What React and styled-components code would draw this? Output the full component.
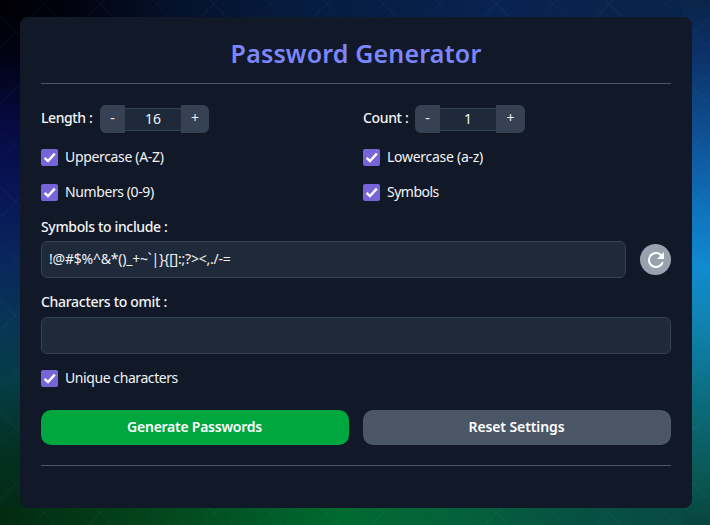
import React, { useState } from "react";
import styled, { createGlobalStyle } from "styled-components";

const GlobalStyle = createGlobalStyle`
  * { box-sizing: border-box; }
  body { margin: 0; background: #06203c; }
  button, input { font: inherit; color: inherit; }
`;

const Page = styled.main`
  height: 525px;
  padding: 17px 18px 17px 20px;
  overflow: hidden;
  color: #f3f4f6;
  font: 400 14px/20px "Noto Sans", "Open Sans", sans-serif;
  background:
    repeating-linear-gradient(45deg, transparent 0 39px, rgba(140, 180, 220, 0.04) 39px 40px),
    repeating-linear-gradient(-45deg, transparent 0 39px, rgba(140, 180, 220, 0.04) 39px 40px),
    linear-gradient(#092448 0%, #0b2d62 8%, #0e4f92 25%, #0f72bd 40%, #108bcf 51%, #0e81ac 63%, #0b6b7c 77%, #095650 92%, #08443f 100%) 100% 0 / 28px 100% no-repeat,
    linear-gradient(90deg, #022a10 0%, #03441c 22%, #006a30 50%, #04613b 68%, #065142 84%, #084a45 100%) 0 100% / 682px 17px no-repeat,
    linear-gradient(90deg, #000006 0%, #02020f 11%, #041029 24%, #061c40 45%, #082350 72%, #09244a 100%) 0 0 / 682px 17px no-repeat,
    linear-gradient(#000006 0%, #020212 10%, #060a42 24%, #081556 37%, #09265c 49%, #073554 62%, #053c46 73%, #033022 86%, #022a10 100%);
`;

const Card = styled.section`
  height: 491px;
  padding: 0 21px;
  border-radius: 8px;
  background: #111827;
`;

const Title = styled.h1`
  margin: 0;
  height: 67px;
  padding-top: 18px;
  border-bottom: 1px solid #4e5665;
  color: #7c86ff;
  text-align: center;
  font-size: 25px;
  line-height: 37px;
  font-weight: 600;
  letter-spacing: ${(p) => p.$track}px;
`;

const Columns = styled.div`
  display: grid;
  grid-template-columns: 308px 308px;
  column-gap: 14px;
`;

const Options = styled(Columns)`
  padding-top: 21px;
  grid-template-rows: 28px 18px 22px;
  row-gap: 15px;
  align-items: center;
`;

const Field = styled.div`
  display: flex;
  align-items: center;
`;

const Text = styled.span`
  white-space: nowrap;
  font-weight: ${(p) => p.$weight || 400};
  letter-spacing: ${(p) => p.$track || 0}px;
`;

const StepperBox = styled.div`
  display: flex;
  align-items: center;
  margin-left: 7px;
`;

const StepButton = styled.button`
  width: ${(p) => p.$width}px;
  height: 28px;
  padding: 0 0 2px;
  border: 0;
  background: #364153;
  border-radius: ${(p) => (p.$end ? "0 6px 6px 0" : "6px 0 0 6px")};
`;

const StepInput = styled.input`
  width: 56px;
  height: 23px;
  padding: 0 0 2px;
  border: solid #364153;
  border-width: 1px 0;
  background: #1e2939;
  text-align: center;
  outline: 0;
`;

const StepLabel = styled.div`
  width: ${(p) => p.$width}px;
  padding-bottom: 2px;
`;

const CheckLabel = styled.label`
  display: flex;
  align-items: center;
  gap: 7px;
  height: 18px;
`;

const CheckBox = styled.button`
  width: 17px;
  height: 17px;
  padding: 0;
  border: 0;
  border-radius: 2px;
  background: #7764d8;
  display: block;
`;

const Caption = styled.div`
  height: 20px;
  margin-top: ${(p) => p.$top}px;
`;

const TextInput = styled.input`
  display: block;
  width: 100%;
  height: 37px;
  padding: 0 7px 2px;
  border: 1px solid #364153;
  border-radius: 6px;
  background: #1e2939;
  outline: 0;
  letter-spacing: ${(p) => p.$track || 0}px;
`;

const SymbolRow = styled.div`
  display: flex;
  align-items: center;
  gap: 14px;
  margin-top: 4px;
`;

const RefreshButton = styled.button`
  display: grid;
  place-items: center;
  flex: 0 0 31px;
  height: 31px;
  padding: 0;
  border: 0;
  border-radius: 50%;
  background: #99a1af;
  color: #fff;
`;

const OmitRow = styled.div`
  margin: 5px 0 15px;
`;

const Actions = styled(Columns)`
  margin-top: 23px;
  padding-bottom: 20px;
  border-bottom: 1px solid #4e5665;
`;

const Action = styled.button`
  height: 35px;
  padding: 0 1px 2px 0;
  border: 0;
  border-radius: 10px;
  background: ${(p) => (p.$primary ? "#00a63e" : "#4a5565")};
  color: #fff;
`;

function Stepper({ label, labelWidth, track, initial, endWidth }) {
  const [value, setValue] = useState(initial);
  return (
    <Field>
      <StepLabel $width={labelWidth}><Text $weight={500} $track={track}>{label}</Text></StepLabel>
      <StepperBox>
        <StepButton $width={25} onClick={() => setValue(Math.max(1, value - 1))}>-</StepButton>
        <StepInput value={value} onChange={(e) => setValue(Number(e.target.value) || 1)} />
        <StepButton $end $width={endWidth} onClick={() => setValue(value + 1)}>+</StepButton>
      </StepperBox>
    </Field>
  );
}

function Check({ label, track }) {
  const [on, setOn] = useState(true);
  return (
    <CheckLabel>
      <CheckBox role="checkbox" aria-checked={on} onClick={() => setOn(!on)}>
        {on && (
          <svg width="17" height="17" viewBox="0 0 17 17" fill="none" stroke="#fff" strokeWidth="2.4" display="block">
            <path d="M3.6 8.8 7 12.1 13.8 4.6" />
          </svg>
        )}
      </CheckBox>
      <Text $track={track}>{label}</Text>
    </CheckLabel>
  );
}

export default function App() {
  const [symbols, setSymbols] = useState("!@#$%^&*()_+~`|}{[]:;?><,./-=");
  const [omit, setOmit] = useState("");
  return (
    <Page>
      <GlobalStyle />
      <Card>
        <Title $track={0.15}>Password Generator</Title>
        <Options>
          <Stepper label="Length :" labelWidth={52} track={-0.4} initial={16} endWidth={28} />
          <Stepper label="Count :" labelWidth={45} track={-0.35} initial={1} endWidth={29} />
          <Check label="Uppercase (A-Z)" track={-0.33} />
          <Check label="Lowercase (a-z)" track={-0.27} />
          <Check label="Numbers (0-9)" track={-0.4} />
          <Check label="Symbols" track={-0.5} />
        </Options>
        <Caption $top={14}><Text $weight={500} $track={-0.35}>Symbols to include :</Text></Caption>
        <SymbolRow>
          <TextInput $track={-0.22} value={symbols} onChange={(e) => setSymbols(e.target.value)} />
          <RefreshButton aria-label="Restore symbols">
            <svg width="24" height="24" viewBox="0 0 24 24" fill="currentColor">
              <path d="M17.65 6.35A7.96 7.96 0 0 0 12 4a8 8 0 1 0 7.73 10h-2.08A6 6 0 1 1 12 6c1.66 0 3.14.69 4.22 1.78L13 11h7V4z" />
            </svg>
          </RefreshButton>
        </SymbolRow>
        <Caption $top={14}><Text $weight={500} $track={-0.3}>Characters to omit :</Text></Caption>
        <OmitRow>
          <TextInput value={omit} onChange={(e) => setOmit(e.target.value)} />
        </OmitRow>
        <Check label="Unique characters" track={-0.42} />
        <Actions>
          <Action $primary><Text $weight={600} $track={-0.25}>Generate Passwords</Text></Action>
          <Action><Text $weight={600} $track={-0.1}>Reset Settings</Text></Action>
        </Actions>
      </Card>
    </Page>
  );
}
